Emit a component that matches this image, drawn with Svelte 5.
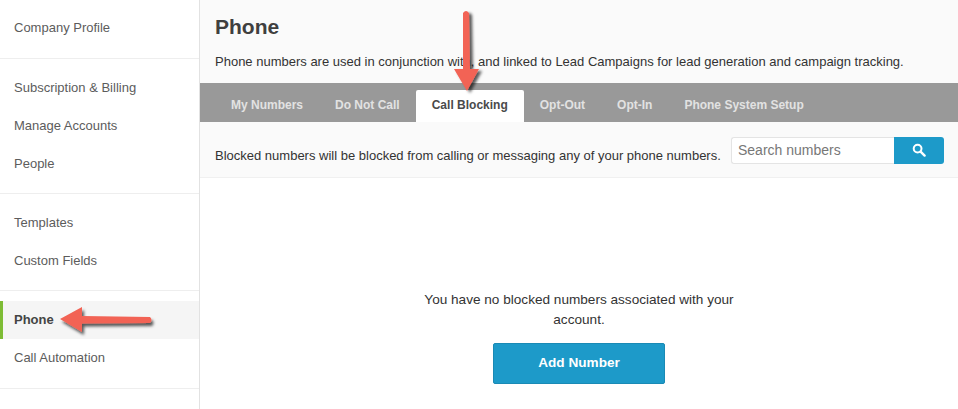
<script>
  const groups = [
    { items: ['Company Profile'] },
    { items: ['Subscription & Billing', 'Manage Accounts', 'People'] },
    { items: ['Templates', 'Custom Fields'] },
    { items: ['Phone', 'Call Automation'] }
  ];
  const tabs = ['My Numbers', 'Do Not Call', 'Call Blocking', 'Opt-Out', 'Opt-In', 'Phone System Setup'];
</script>

<div class="page">
  <nav class="side">
    {#each groups as g, i}
      <ul class="group g{i}">
        {#each g.items as item}
          <li class:active={item === 'Phone'}>{item}</li>
        {/each}
      </ul>
    {/each}
  </nav>
  <main class="main">
    <header class="head">
      <h1>Phone</h1>
      <p>Phone numbers are used in conjunction with, and linked to Lead Campaigns for lead generation and campaign tracking.</p>
    </header>
    <div class="tabs">
      {#each tabs as t}
        <span class="tab" class:on={t === 'Call Blocking'}>{t}</span>
      {/each}
    </div>
    <div class="bar">
      <span class="note">Blocked numbers will be blocked from calling or messaging any of your phone numbers.</span>
      <div class="search">
        <div class="input">Search numbers</div>
        <button class="go" aria-label="Search">
          <svg width="14" height="14" viewBox="0 0 14 14"><circle cx="5.6" cy="5.6" r="3.9" fill="none" stroke="#fff" stroke-width="2"/><path d="M8.6 8.6 L12.6 12.6" stroke="#fff" stroke-width="2.4" stroke-linecap="round"/></svg>
        </button>
      </div>
    </div>
    <section class="empty">
      <p>You have no blocked numbers associated with your account.</p>
      <button class="add">Add Number</button>
    </section>
  </main>

  <svg class="arrow a1" width="110" height="40" viewBox="0 0 110 40">
    <defs><filter id="s1" x="-20%" y="-40%" width="150%" height="190%"><feDropShadow dx="2" dy="3" stdDeviation="1.5" flood-color="#000" flood-opacity=".65"/></filter></defs>
    <path d="M2 13 L24 1 L24 10 L92 11 Q95 14 92 17 L24 17.5 L24 26 Z" fill="#f26355" filter="url(#s1)"/>
  </svg>
  <svg class="arrow a2" width="40" height="96" viewBox="0 0 40 96">
    <defs><filter id="s2" x="-40%" y="-20%" width="190%" height="150%"><feDropShadow dx="3" dy="2" stdDeviation="1.5" flood-color="#000" flood-opacity=".65"/></filter></defs>
    <path d="M13 5 Q16 1 19 5 L20 61 L29 61 L17 83 L4 61 L13 61 Z" fill="#f26355" filter="url(#s2)"/>
  </svg>
</div>

<style>
  :global(body) { margin: 0; background: #fff; }
  .page {
    position: relative;
    width: 958px; height: 409px; overflow: hidden;
    display: flex;
    font-family: "Liberation Sans", Arial, sans-serif;
    color: #444;
  }
  .side { width: 199px; border-right: 1px solid #e2e2e2; flex: none; }
  ul { list-style: none; margin: 0; padding: 9px 0 11px; border-bottom: 1px solid #eee; }
  .g3 { padding: 10px 0 11px; }
  li {
    height: 38px; line-height: 40px; padding-left: 14px;
    font-size: 13px; color: #5c5c5c;
  }
  .g0 li, .g3 li { line-height: 38px; }
  .g3 li.active {
    background: #f5f5f5; font-weight: 700; color: #444;
    border-left: 3px solid #7ebc35; padding-left: 11px;
  }
  .main { flex: 1; min-width: 0; display: flex; flex-direction: column; }
  .head { height: 83px; background: #fafafa; padding: 0 15px; box-sizing: border-box; }
  h1 { margin: 0; padding-top: 14px; font-size: 21px; line-height: 26px; color: #3f3f3f; }
  .head p { margin: 13px 0 0; font-size: 13px; line-height: 17px; color: #333; white-space: nowrap; }
  .tabs { height: 39px; background: #999; display: flex; padding: 7px 0 0 15px; box-sizing: border-box; }
  .tab {
    padding: 0 16px; height: 32px; line-height: 30px;
    font-size: 12px; font-weight: 700; color: #e2e2e2;
  }
  .tab.on { background: #fff; color: #4a4a4a; border-radius: 2px 2px 0 0; }
  .bar {
    height: 56px; background: #fafafa; border-bottom: 1px solid #f0f0f0; box-sizing: border-box;
    display: flex; align-items: center; justify-content: space-between;
    padding: 0 14px 0 15px; font-size: 13px; color: #333; white-space: nowrap;
  }
  .note { margin-top: 12px; }
  .search { display: flex; height: 27px; margin-top: 1px; }
  .input {
    width: 156px; border: 1px solid #e4e4e4; border-right: 0; border-radius: 3px 0 0 3px;
    background: #fff; padding-left: 6px; font-size: 14px; line-height: 25px; color: #777;
  }
  .go {
    width: 50px; border: 0; padding: 0; background: #1d9ac9; border-radius: 0 3px 3px 0;
    display: flex; align-items: center; justify-content: center;
  }
  .empty { flex: 1; display: flex; flex-direction: column; align-items: center; padding-top: 112px; box-sizing: border-box; }
  .empty p { margin: 0; width: 330px; text-align: center; font-size: 13.6px; line-height: 20px; color: #333; }
  .add {
    margin-top: 13px; width: 172px; height: 41px; padding-bottom: 3px; border: 1px solid #1a8ab5; border-radius: 2px;
    background: #1d9ac9; color: #fff; font: 700 13.6px "Liberation Sans", Arial, sans-serif;
  }
  .arrow { position: absolute; }
  .a1 { left: 58px; top: 306px; }
  .a2 { left: 450px; top: 8px; }
</style>
